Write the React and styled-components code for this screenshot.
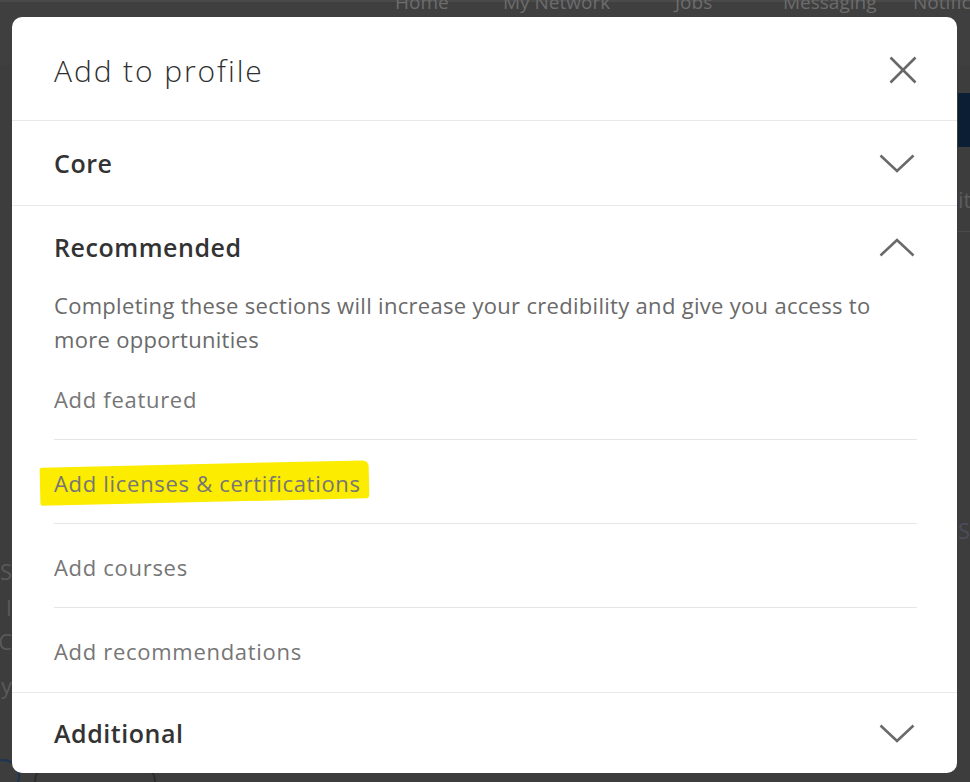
import React from "react";
import styled, { createGlobalStyle } from "styled-components";

const Global = createGlobalStyle`
  html, body { margin: 0; padding: 0; }
  body {
    width: 970px;
    height: 782px;
    overflow: hidden;
    background: #3c3c3c;
    font-family: "Open Sans", "Noto Sans", "Liberation Sans", sans-serif;
  }
`;

const Page = styled.div`
  position: relative;
  width: 970px;
  height: 782px;
  overflow: hidden;
  background: #3d3d3d;
  display: flex;
  flex-direction: column;
`;

/* ---------- dimmed page behind the dialog ---------- */
const NavBar = styled.div`
  height: 65px;
  flex: none;
  display: flex;
  align-items: flex-start;
  padding-left: 395px;
  background: #3f3f3f;
  border-top: 2px solid #4a4a4a;
  box-sizing: border-box;
`;

const NavItem = styled.span`
  width: ${(p) => p.$w}px;
  flex: none;
  margin-top: -9px;
  font-size: 19px;
  line-height: 19px;
  color: #6c6c6c;
  white-space: nowrap;
`;

const Body = styled.div`
  flex: 1;
  display: grid;
  grid-template-columns: 12px 1fr 12px;
`;

const SideCol = styled.div`
  display: flex;
  flex-direction: column;
  overflow: hidden;
`;

const Fragment = styled.span`
  margin-top: ${(p) => p.$top}px;
  font-size: 22px;
  line-height: 24px;
  color: ${(p) => p.$color || "#5a5a5a"};
  white-space: nowrap;
  direction: ${(p) => (p.$right ? "rtl" : "ltr")};
`;

const NavyBand = styled.div`
  margin-top: 28px;
  height: 54px;
  background: #0b1e33;
`;

const FaintRule = styled.div`
  margin-top: ${(p) => p.$top}px;
  height: 1px;
  background: #4b4b4b;
`;

const Footer = styled.div`
  height: 17px;
  flex: none;
  display: flex;
  gap: 14px;
`;

const Ring = styled.div`
  width: 34px;
  height: 34px;
  margin-left: -14px;
  border-radius: 50%;
  border: 2px solid #1c3552;
  box-sizing: border-box;
  margin-top: -6px;
`;

const Pill = styled.div`
  width: 122px;
  height: 30px;
  border-radius: 15px;
  border: 2px solid #2c2c2c;
  box-sizing: border-box;
  margin-top: 1px;
`;

/* ---------- dialog ---------- */
const Dialog = styled.div`
  position: absolute;
  top: 17px;
  left: 12px;
  width: 945px;
  height: 756px;
  background: #ffffff;
  border-radius: 10px;
  overflow: hidden;
  display: flex;
  flex-direction: column;
`;

const Header = styled.div`
  height: 104px;
  flex: none;
  display: flex;
  align-items: center;
  justify-content: space-between;
  padding: 3px 40px 0 42px;
  border-bottom: 1px solid #e9e9e9;
  box-sizing: border-box;
`;

const Title = styled.h2`
  margin: 0;
  font-size: 30px;
  font-weight: 300;
  color: #2f2f2f;
  letter-spacing: 1.9px;
`;

const IconButton = styled.button`
  border: none;
  background: none;
  padding: 0;
  display: flex;
  cursor: pointer;
`;

const Section = styled.div`
  flex: none;
  border-bottom: ${(p) => (p.$last ? "none" : "1px solid #e9e9e9")};
`;

const SectionHeader = styled.div`
  height: ${(p) => p.$h || 84}px;
  display: flex;
  align-items: center;
  justify-content: space-between;
  padding: 0 42px ${(p) => p.$pb || 0}px 42px;
  box-sizing: border-box;
`;

const SectionTitle = styled.span`
  font-size: 25px;
  font-weight: 600;
  color: #333333;
  letter-spacing: 0.55px;
`;

const Description = styled.p`
  margin: 0;
  padding: 0 60px 0 42px;
  font-size: 22px;
  line-height: 34px;
  letter-spacing: 0.3px;
  color: #6a6a6a;
`;

const ItemList = styled.ul`
  list-style: none;
  margin: 0;
  padding: 0 40px 0 42px;
`;

const Item = styled.li`
  height: 84px;
  display: flex;
  align-items: center;
  box-sizing: border-box;
  padding-top: 2px;
  border-bottom: ${(p) => (p.$last ? "none" : "1px solid #e6e6e6")};
  font-size: 22px;
  letter-spacing: 0.7px;
  color: #767676;
`;

const Highlight = styled.span`
  position: relative;
  z-index: 0;
  &::before {
    content: "";
    position: absolute;
    z-index: -1;
    left: -14px;
    right: -8px;
    top: -4px;
    bottom: -4px;
    background: #fbec00;
    transform: rotate(-1.3deg);
    border-radius: 2px 6px 4px 2px;
  }
`;

const Close = () => (
  <svg width="28" height="28" viewBox="0 0 28 28">
    <path d="M1.5 1.5 L26.5 26.5 M26.5 1.5 L1.5 26.5" stroke="#686868" strokeWidth="2.6" fill="none" />
  </svg>
);

const Chevron = ({ up }) => (
  <svg width="36" height="19" viewBox="0 0 36 19">
    <polyline
      points={up ? "1.5,17.5 18,2 34.5,17.5" : "1.5,1.5 18,17 34.5,1.5"}
      stroke="#6a6a6a"
      strokeWidth="2.6"
      fill="none"
    />
  </svg>
);

export default function App() {
  return (
    <>
      <Global />
      <Page>
        <NavBar>
          <NavItem $w={108}>Home</NavItem>
          <NavItem $w={172}>My Network</NavItem>
          <NavItem $w={108}>Jobs</NavItem>
          <NavItem $w={130}>Messaging</NavItem>
          <NavItem $w={120}>Notifications</NavItem>
        </NavBar>
        <Body>
          <SideCol>
            <Fragment $top={494} $right>S</Fragment>
            <Fragment $top={12} $right>I</Fragment>
            <Fragment $top={10} $right>C</Fragment>
            <Fragment $top={20} $right>y</Fragment>
          </SideCol>
          <div />
          <SideCol>
            <NavyBand />
            <Fragment $top={40} $color="#5c5c5c">it</Fragment>
            <FaintRule $top={20} />
            <Fragment $top={286} $color="#4c4c5e">Si</Fragment>
          </SideCol>
        </Body>
        <Footer>
          <Ring />
          <Pill />
        </Footer>

        <Dialog role="dialog" aria-label="Add to profile">
          <Header>
            <Title>Add to profile</Title>
            <IconButton aria-label="Dismiss">
              <Close />
            </IconButton>
          </Header>

          <Section>
            <SectionHeader>
              <SectionTitle>Core</SectionTitle>
              <Chevron />
            </SectionHeader>
          </Section>

          <Section>
            <SectionHeader $h={82}>
              <SectionTitle>Recommended</SectionTitle>
              <Chevron up />
            </SectionHeader>
            <Description>
              Completing these sections will increase your credibility and give you access to more opportunities
            </Description>
            <ItemList>
              <Item>
                <span>Add featured</span>
              </Item>
              <Item>
                <Highlight>Add licenses &amp; certifications</Highlight>
              </Item>
              <Item>
                <span>Add courses</span>
              </Item>
              <Item $last>
                <span>Add recommendations</span>
              </Item>
            </ItemList>
          </Section>

          <Section $last>
            <SectionHeader $pb={4}>
              <SectionTitle>Additional</SectionTitle>
              <Chevron />
            </SectionHeader>
          </Section>
        </Dialog>
      </Page>
    </>
  );
}
